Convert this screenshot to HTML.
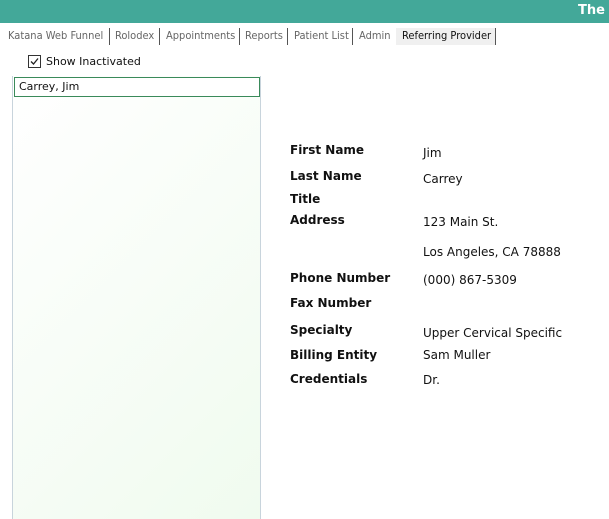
<html><head><style>
body{margin:0;width:609px;height:519px;background:#fff;font-family:"DejaVu Sans","Liberation Sans",sans-serif;position:relative;overflow:hidden}
.hdr{position:absolute;left:0;top:0;width:609px;height:23px;background:#43a899}
.hdr span{position:absolute;right:4px;top:3px;color:#fff;font-weight:bold;font-size:13px}
.tabs{position:absolute;top:28px;left:0;height:17px;font-size:11px;color:#666;font-family:"DejaVu Sans Condensed","DejaVu Sans",sans-serif}
.tabs span{position:absolute;top:0;height:17px;line-height:16px;white-space:nowrap}
.sep{position:absolute;top:28px;width:1px;height:17px;background:#555}
.a{position:absolute;white-space:nowrap}
.l{font-weight:bold;font-size:12px;color:#111;left:290px}
.v{font-size:12px;color:#111;left:423px}
</style></head><body>
<div class="hdr"><span>The</span></div>
<div class="tabs">
<span style="left:8px">Katana Web Funnel</span>
<span style="left:115px">Rolodex</span>
<span style="left:166px">Appointments</span>
<span style="left:245px">Reports</span>
<span style="left:294px">Patient List</span>
<span style="left:359px">Admin</span>
<span style="left:396px;width:99px;background:#f0f0f0;color:#111;padding-left:6px;box-sizing:border-box">Referring Provider</span>
</div>
<div class="sep" style="left:109px"></div><div class="sep" style="left:159px"></div><div class="sep" style="left:239px"></div><div class="sep" style="left:287px"></div><div class="sep" style="left:352px"></div><div class="sep" style="left:495px"></div>
<div class="a" style="left:28px;top:55px;width:11px;height:11px;border:1px solid #333;background:#fff"><svg width="11" height="11" style="position:absolute;left:0;top:0"><path d="M2 5.5 L4.5 8 L9 2.5" stroke="#222" stroke-width="1.3" fill="none"/></svg></div>
<div class="a" style="left:46px;top:55px;font-size:11px;color:#111">Show Inactivated</div>
<div class="a" style="left:12px;top:76px;width:247px;height:443px;border-left:1px solid #c8d4dc;border-right:1px solid #c8d4dc;background:linear-gradient(135deg,#fff 0%,#f0fbef 100%)"></div>
<div class="a" style="left:14px;top:77px;width:244px;height:18px;border:1px solid #3a8a5a;background:#fff;font-size:11px;line-height:17px;padding-left:4px;box-sizing:border-box;width:246px;height:20px;color:#111">Carrey, Jim</div>
<div class="a l" style="top:143px">First Name</div><div class="a v" style="top:146px">Jim</div>
<div class="a l" style="top:169px">Last Name</div><div class="a v" style="top:172px">Carrey</div>
<div class="a l" style="top:192px">Title</div>
<div class="a l" style="top:213px">Address</div><div class="a v" style="top:215px">123 Main St.</div>
<div class="a v" style="top:245px">Los Angeles, CA 78888</div>
<div class="a l" style="top:271px">Phone Number</div><div class="a v" style="top:273px">(000) 867-5309</div>
<div class="a l" style="top:296px">Fax Number</div>
<div class="a l" style="top:323px">Specialty</div><div class="a v" style="top:326px">Upper Cervical Specific</div>
<div class="a l" style="top:348px">Billing Entity</div><div class="a v" style="top:348px">Sam Muller</div>
<div class="a l" style="top:372px">Credentials</div><div class="a v" style="top:373px">Dr.</div>
</body></html>
